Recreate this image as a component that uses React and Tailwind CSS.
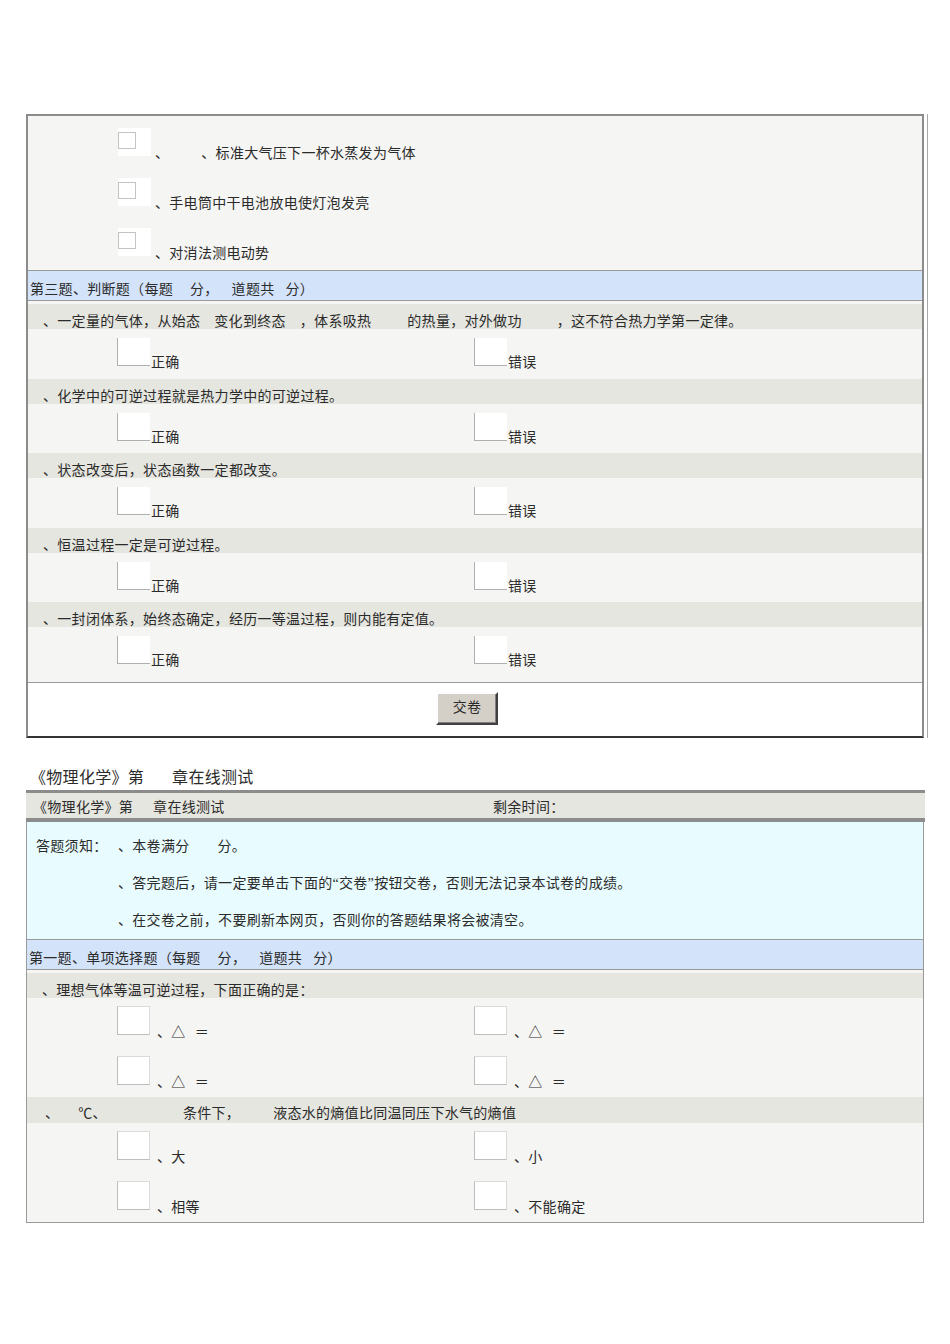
// Online physics-chemistry quiz page: the tail of one test paper (true/false
// section and the submit button) followed by the head of the next paper.

const FONT = "font-['Liberation_Serif','Noto_Sans_CJK_SC',serif]";

// Blank stretch where the source dropped a number or a formula.
const Gap = ({ w }) => <span className={`inline-block ${w}`} />;

// Section heading strip: light blue with grey rules above and below.
const SectionHeader = ({ title }) => (
    <div className="h-[31px] border-y border-[#9a9a9a] bg-[#d3e3fa] flex items-end pb-[2px] pl-[2px] leading-[16px] whitespace-nowrap">
        <span>{title}</span>
        <Gap w="w-[17px]" />
        <span>分，</span>
        <Gap w="w-[13px]" />
        <span>道题共</span>
        <Gap w="w-[11px]" />
        <span>分）</span>
    </div>
);

// Grey strip carrying the question stem.
const QuestionRow = ({ children, className = 'pt-[10px]' }) => (
    <div className={`h-[25px] bg-[#e6e6e0] pl-[15px] leading-[16px] whitespace-nowrap ${className}`}>
        {children}
    </div>
);

const JudgeBox = () => (
    <div className="w-[33px] h-[28px] shrink-0 bg-white border-l border-b border-[#b0b0b0]" />
);

const ChoiceBox = () => (
    <div className="w-[33px] h-[29px] shrink-0 bg-white border border-[#dadada] border-l-[#bdbdbd] border-b-[#bdbdbd]" />
);

// True / false answer line under each statement.
const JudgeAnswers = () => (
    <div className="h-[49.5px] pt-[9px] pl-[89px] grid grid-cols-[357px_1fr] items-start">
        {['正确', '错误'].map((label) => (
            <div key={label} className="flex items-end">
                <JudgeBox />
                <span className="ml-[1px] leading-[16px] -mb-[5px]">{label}</span>
            </div>
        ))}
    </div>
);

// Two options side by side, used by the single-choice questions.
const ChoiceLine = ({ left, right, className = 'h-[50px]' }) => (
    <div className={`pt-[8px] pl-[90px] grid grid-cols-[357px_1fr] items-start ${className}`}>
        {[left, right].map((content, i) => (
            <div key={i} className="flex items-end">
                <ChoiceBox />
                <span className="ml-[7px] leading-[16px] -mb-[6px] whitespace-nowrap">{content}</span>
            </div>
        ))}
    </div>
);

const Delta = () => (
    <>
        <span>、</span>
        <span>△</span>
        <Gap w="w-[9px]" />
        <span>＝</span>
    </>
);

const judgeQuestions = [
    (
        <>
            <span>、一定量的气体，从始态</span>
            <Gap w="w-[14px]" />
            <span>变化到终态</span>
            <Gap w="w-[14px]" />
            <span>，体系吸热</span>
            <Gap w="w-[36px]" />
            <span>的热量，对外做功</span>
            <Gap w="w-[35px]" />
            <span>，这不符合热力学第一定律。</span>
        </>
    ),
    <span>、化学中的可逆过程就是热力学中的可逆过程。</span>,
    <span>、状态改变后，状态函数一定都改变。</span>,
    <span>、恒温过程一定是可逆过程。</span>,
    <span>、一封闭体系，始终态确定，经历一等温过程，则内能有定值。</span>,
];

export default function App() {
    return (
        <div lang="zh-CN" className={`min-h-[1344px] bg-white text-[#2b2b2b] text-[14px] tracking-[0.3px] ${FONT}`}>
            <div className="pt-[114px] pl-[26px]">
                {/* First paper, continued */}
                <div className="w-[902px] pr-[3px] border-r border-[#a8a8a8]">
                    <div className="border-2 border-[#8c8c8c] border-b-[#333333] bg-[#f5f5f3]">
                        <div className="pt-[12px] pb-[14px] pl-[90px] flex flex-col gap-[22px]">
                            {[
                                (
                                    <>
                                        <span>、</span>
                                        <Gap w="w-[32px]" />
                                        <span>、标准大气压下一杯水蒸发为气体</span>
                                    </>
                                ),
                                <span>、手电筒中干电池放电使灯泡发亮</span>,
                                <span>、对消法测电动势</span>,
                            ].map((text, i) => (
                                <div key={i} className="flex items-end">
                                    <div className="w-[33px] h-[28px] shrink-0 bg-white pt-[4px]">
                                        <div className="w-[18px] h-[17px] border border-[#c4c4c4]" />
                                    </div>
                                    <span className="ml-[4px] leading-[16px] -mb-[6px] whitespace-nowrap">{text}</span>
                                </div>
                            ))}
                        </div>

                        <SectionHeader title="第三题、判断题（每题" />

                        <div className="pt-[3px] pb-[5px]">
                            {judgeQuestions.map((q, i) => (
                                <div key={i}>
                                    <QuestionRow>{q}</QuestionRow>
                                    <JudgeAnswers />
                                </div>
                            ))}
                        </div>

                        <div className="h-[54px] border-t border-[#9a9a9a] bg-white pt-[9px] pl-[408px]">
                            <button className="w-[62px] h-[33px] bg-[#d4d0c8] border-2 border-t-white border-l-white border-r-[#404040] border-b-[#404040] shadow-[inset_-1px_-1px_0_#808080] text-[14px] leading-[16px]">
                                交卷
                            </button>
                        </div>
                    </div>
                </div>

                {/* Second paper */}
                <div className="mt-[31px] pl-[4px] text-[16px] leading-[18px] whitespace-nowrap">
                    <span>《物理化学》第</span>
                    <Gap w="w-[28px]" />
                    <span>章在线测试</span>
                </div>

                <div className="mt-[3px] w-[899px]">
                    <div className="h-[32px] border-t-[3px] border-b-[4px] border-[#8c8c8c] bg-[#e6e6e0] flex items-end pb-[2px] pl-[7px] leading-[16px] whitespace-nowrap">
                        <span className="w-[460px] shrink-0">
                            <span>《物理化学》第</span>
                            <Gap w="w-[20px]" />
                            <span>章在线测试</span>
                        </span>
                        <span>剩余时间：</span>
                    </div>

                    <div className="w-[898px] border-x border-b border-[#9a9a9a] bg-[#f5f5f3]">
                        <div className="bg-[#e8fbfe] pt-[6px] pl-[9px] leading-[37px] grid grid-cols-[82px_1fr] whitespace-nowrap">
                            <span>答题须知：</span>
                            <span>
                                <span>、本卷满分</span>
                                <Gap w="w-[28px]" />
                                <span>分。</span>
                            </span>
                            <span />
                            <span>、答完题后，请一定要单击下面的“交卷”按钮交卷，否则无法记录本试卷的成绩。</span>
                            <span />
                            <span>、在交卷之前，不要刷新本网页，否则你的答题结果将会被清空。</span>
                        </div>

                        <SectionHeader title="第一题、单项选择题（每题" />

                        <div className="pt-[3px]">
                            <QuestionRow>
                                <span>、理想气体等温可逆过程，下面正确的是：</span>
                            </QuestionRow>
                            <ChoiceLine left={<Delta />} right={<Delta />} />
                            <ChoiceLine left={<Delta />} right={<Delta />} className="h-[49px]" />

                            <QuestionRow className="pt-[9px] !h-[26px]">
                                <Gap w="w-[3px]" />
                                <span>、</span>
                                <Gap w="w-[19px]" />
                                <span>℃、</span>
                                <Gap w="w-[76px]" />
                                <span>条件下，</span>
                                <Gap w="w-[33px]" />
                                <span>液态水的熵值比同温同压下水气的熵值</span>
                            </QuestionRow>
                            <ChoiceLine left="、大" right="、小" />
                            <ChoiceLine left="、相等" right="、不能确定" className="h-[49px]" />
                        </div>
                    </div>
                </div>
            </div>
        </div>
    );
}
